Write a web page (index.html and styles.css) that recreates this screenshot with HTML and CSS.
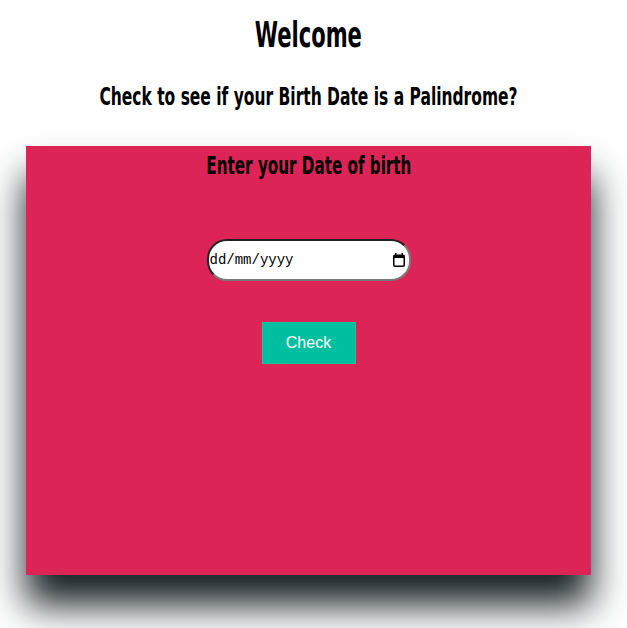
FILE: index.html
```html
<!DOCTYPE html>
<html lang="en-GB">
<head>
<meta charset="utf-8">
<title>Palindrome Birthday</title>
<link rel="stylesheet" href="styles.css">
</head>
<body>
<div class="page">
  <h1 class="title"><span class="narrow narrow-lg">Welcome</span></h1>
  <h2 class="subtitle"><span class="narrow narrow-md">Check to see if your Birth Date is a Palindrome?</span></h2>
  <section class="card">
    <h2 class="card-title"><span class="narrow">Enter your Date of birth</span></h2>
    <label class="date-field">
      <input class="date-input" type="text" placeholder="dd/mm/yyyy" aria-label="Date of birth">
      <svg class="cal-icon" width="12" height="14" viewBox="0 0 12 14" aria-hidden="true">
        <rect x="2" y="0" width="1.6" height="3" fill="#000"/>
        <rect x="8.4" y="0" width="1.6" height="3" fill="#000"/>
        <rect x="0.75" y="2.25" width="10.5" height="11" rx="1.2" fill="none" stroke="#000" stroke-width="1.5"/>
        <rect x="0.75" y="2.25" width="10.5" height="2.8" fill="#000"/>
      </svg>
    </label>
    <button class="check-btn" type="button">Check</button>
  </section>
</div>
</body>
</html>
```

FILE: styles.css
```css
html {
  background: #ffffff;
}

body {
  margin: 0;
  font-family: "DejaVu Sans Condensed", "Liberation Sans", sans-serif;
  color: #000;
}

.page {
  width: 565px;
  margin-left: 26px;
  padding-top: 8px;
  padding-bottom: 53px;
}

.title,
.subtitle,
.card-title {
  margin: 0;
  display: flex;
  justify-content: center;
  font-weight: 700;
  white-space: nowrap;
}

.title {
  padding-top: 5px;
  font-size: 36px;
  line-height: 44px;
}

.subtitle {
  padding-top: 24px;
  font-size: 25px;
  line-height: 32px;
}

.narrow {
  display: inline-block;
  transform: scaleX(0.675);
  transform-origin: center;
}

.narrow-lg {
  transform: scaleX(0.65);
}

.narrow-md {
  transform: scaleX(0.689);
}

.card {
  margin-top: 33px;
  height: 429px;
  background: #dc2556;
  box-shadow: 0 30px 36px #172024;
  display: flex;
  flex-direction: column;
  align-items: center;
}

.card-title {
  padding-top: 4px;
  font-size: 25px;
  line-height: 32px;
}

.date-field {
  margin-top: 57px;
  width: 204px;
  height: 42px;
  box-sizing: border-box;
  border: 2px solid;
  border-color: #222 #7a7a7a #7a7a7a #222;
  border-radius: 20px;
  background: #fff;
  display: flex;
  align-items: center;
  padding: 0 4px 0 1px;
}

.date-input {
  flex: 1;
  min-width: 0;
  border: none;
  outline: none;
  padding: 0;
  background: transparent;
  font-family: "Liberation Mono", monospace;
  font-size: 14px;
  color: #000;
}

.date-input::placeholder {
  color: #000;
  opacity: 1;
}

.cal-icon {
  flex: none;
  margin-top: -1px;
}

.check-btn {
  margin-top: 41px;
  width: 94px;
  height: 42px;
  box-sizing: border-box;
  border: 1px solid #1fc39a;
  background: #00bfa0;
  color: #fff;
  font-family: "Liberation Sans", Arial, sans-serif;
  font-size: 16px;
  padding: 0;
}
```
